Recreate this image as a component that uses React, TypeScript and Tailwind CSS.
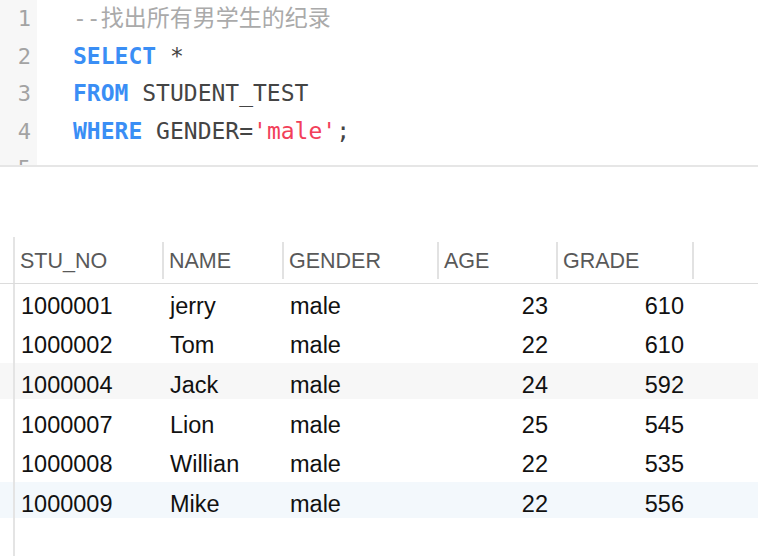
const MONO = "font-['DejaVu_Sans_Mono','Noto_Sans_CJK_SC',monospace]";

const rows = [
  { no: "1000001", name: "jerry", gender: "male", age: 23, grade: 610, bg: "" },
  { no: "1000002", name: "Tom", gender: "male", age: 22, grade: 610, bg: "" },
  { no: "1000004", name: "Jack", gender: "male", age: 24, grade: 592, bg: "bg-[#f7f7f7]" },
  { no: "1000007", name: "Lion", gender: "male", age: 25, grade: 545, bg: "" },
  { no: "1000008", name: "Willian", gender: "male", age: 22, grade: 535, bg: "" },
  { no: "1000009", name: "Mike", gender: "male", age: 22, grade: 556, bg: "bg-[#f3f8fc]" },
];

const headers = [
  { label: "STU_NO", w: "w-[147px]" },
  { label: "NAME", w: "w-[118px]" },
  { label: "GENDER", w: "w-[153px]" },
  { label: "AGE", w: "w-[117px]" },
  { label: "GRADE", w: "w-[134px]" },
];

function Editor() {
  const lines = [1, 2, 3, 4, 5];
  return (
    <div className="flex h-[165px] overflow-hidden border-b-2 border-[#e6e6e6] box-content">
      <div className={`w-[37px] shrink-0 bg-[#f7f7f7] ${MONO} text-[22px] text-[#a3a3a3]`}>
        {lines.map((n) => (
          <div key={n} className="h-[37.5px] leading-[37.5px] text-right pr-[6px]">
            {n}
          </div>
        ))}
      </div>
      <div className={`pl-[36px] ${MONO} text-[23px] text-[#444]`}>
        <div className="h-[37.5px] leading-[37.5px] text-[#aaaaaa] whitespace-pre">--找出所有男学生的纪录</div>
        <div className="h-[37.5px] leading-[37.5px] whitespace-pre">
          <span className="font-bold text-[#3a8ef5]">SELECT</span> *
        </div>
        <div className="h-[37.5px] leading-[37.5px] whitespace-pre">
          <span className="font-bold text-[#3a8ef5]">FROM</span> STUDENT_TEST
        </div>
        <div className="h-[37.5px] leading-[37.5px] whitespace-pre">
          <span className="font-bold text-[#3a8ef5]">WHERE</span> GENDER=
          <span className="text-[#f2405a]">'male'</span>;
        </div>
      </div>
    </div>
  );
}

function ResultGrid() {
  return (
    <div className="flex flex-col flex-1 font-['Liberation_Sans',Arial,sans-serif]">
      {/* header */}
      <div className="flex h-[47px] border-b border-[#dcdcdc]">
        <div className="w-[13px]" />
        <div className="w-[2px] bg-[#e4e4e4]" />
        {headers.map((h) => (
          <div key={h.label} className="flex items-center">
            <div className={`${h.w} pl-[5px] pt-[2px] text-[21.5px] text-[#595959]`}>{h.label}</div>
            <div className="w-[2px] h-[37px] bg-[#e2e2e2]" />
          </div>
        ))}
      </div>
      {/* rows */}
      {rows.map((r) => (
        <div key={r.no} className="flex h-[39.6px]">
          <div className={`w-[13px] h-[36px] ${r.bg}`} />
          <div className="w-[2px] bg-[#e4e4e4]" />
          <div className={`flex-1 h-[36px] flex items-center pt-[9px] text-[23.5px] text-[#111] ${r.bg}`}>
            <div className="w-[149px] pl-[6px]">{r.no}</div>
            <div className="w-[120px] pl-[6px]">{r.name}</div>
            <div className="w-[155px] pl-[6px]">{r.gender}</div>
            <div className="w-[119px] pr-[10px] text-right">{r.age}</div>
            <div className="w-[136px] pr-[10px] text-right">{r.grade}</div>
          </div>
        </div>
      ))}
      <div className="flex flex-1">
        <div className="w-[13px]" />
        <div className="w-[2px] bg-[#e4e4e4]" />
      </div>
    </div>
  );
}

export default function App() {
  return (
    <div className="w-[758px] h-[556px] overflow-hidden bg-white flex flex-col">
      <Editor />
      <div className="h-[70px] shrink-0" />
      <ResultGrid />
    </div>
  );
}
